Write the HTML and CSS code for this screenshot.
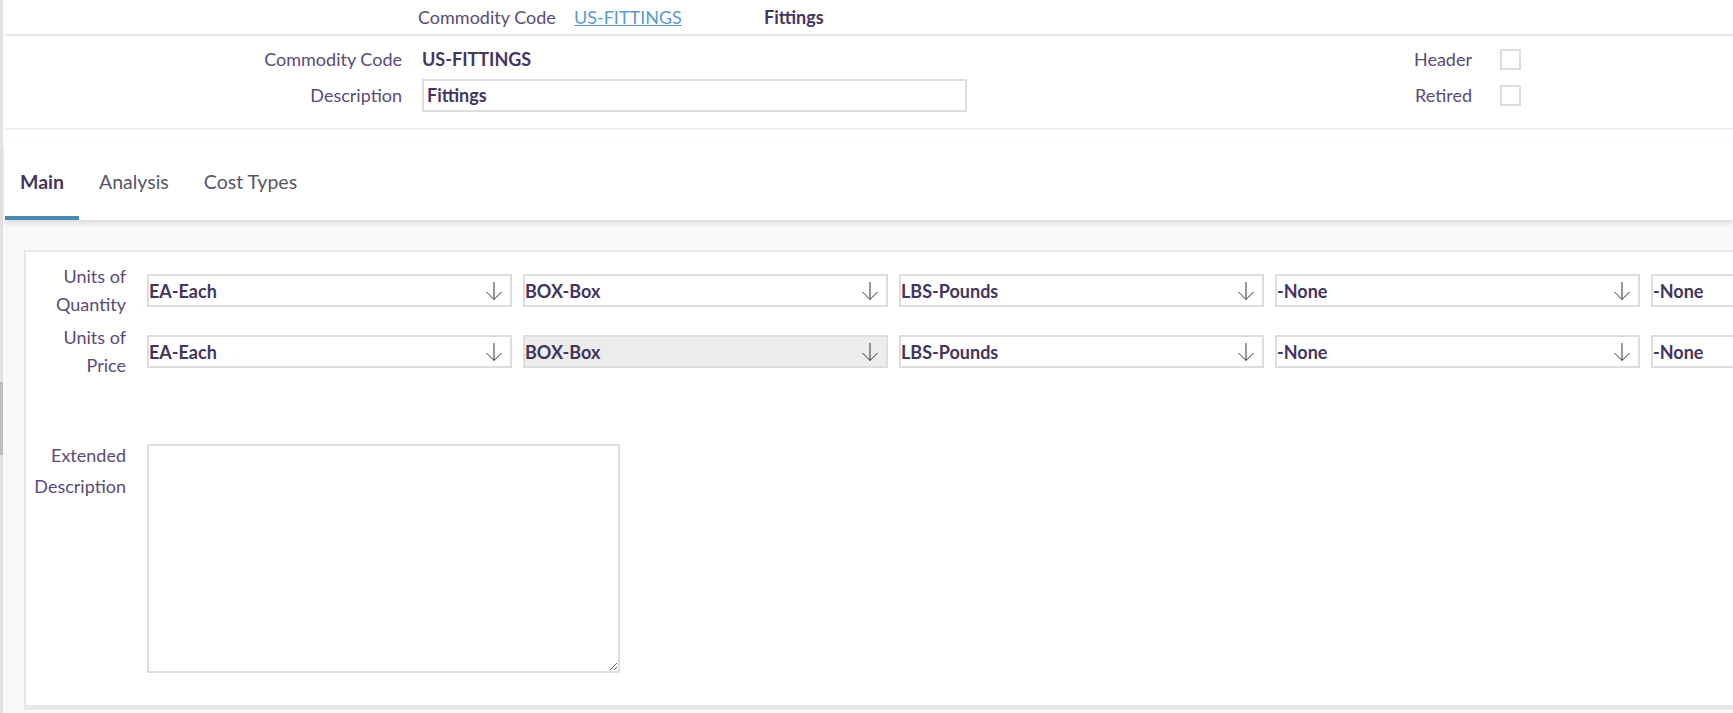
FILE: index.html
```html
<!DOCTYPE html>
<html lang="en">
<head>
<meta charset="utf-8">
<title>Commodity Code</title>
<link rel="stylesheet" href="styles.css">
</head>
<body>
<div class="screen">
  <div class="edge"><div class="edge-thumb"></div></div>
  <div class="page">
    <div class="topbar">
      <span class="top-label">Commodity Code</span>
      <a class="top-link" href="#">US-FITTINGS</a>
      <span class="top-value">Fittings</span>
    </div>

    <div class="record">
      <div class="record-grid">
        <label class="lbl">Commodity Code</label>
        <span class="val">US-FITTINGS</span>
        <label class="lbl">Description</label>
        <div class="textbox">Fittings</div>
      </div>
      <div class="flag-grid">
        <label class="lbl">Header</label>
        <span class="checkbox"></span>
        <label class="lbl">Retired</label>
        <span class="checkbox"></span>
      </div>
    </div>

    <div class="tabs-wrap">
      <nav class="tabs">
        <a class="tab active" href="#">Main</a>
        <a class="tab" href="#">Analysis</a>
        <a class="tab" href="#">Cost Types</a>
      </nav>
    </div>

    <div class="content">
      <div class="panel">
        <div class="uom-row">
          <div class="uom-label">Units of<br>Quantity</div>
          <div class="select"><span>EA-Each</span><svg class="arrow" viewBox="0 0 18 20"><path d="M9 1V18.5M1.5 11L9 18.5L16.5 11"/></svg></div>
          <div class="select"><span>BOX-Box</span><svg class="arrow" viewBox="0 0 18 20"><path d="M9 1V18.5M1.5 11L9 18.5L16.5 11"/></svg></div>
          <div class="select"><span>LBS-Pounds</span><svg class="arrow" viewBox="0 0 18 20"><path d="M9 1V18.5M1.5 11L9 18.5L16.5 11"/></svg></div>
          <div class="select"><span>-None</span><svg class="arrow" viewBox="0 0 18 20"><path d="M9 1V18.5M1.5 11L9 18.5L16.5 11"/></svg></div>
          <div class="select"><span>-None</span><svg class="arrow" viewBox="0 0 18 20"><path d="M9 1V18.5M1.5 11L9 18.5L16.5 11"/></svg></div>
        </div>
        <div class="uom-row">
          <div class="uom-label">Units of<br>Price</div>
          <div class="select"><span>EA-Each</span><svg class="arrow" viewBox="0 0 18 20"><path d="M9 1V18.5M1.5 11L9 18.5L16.5 11"/></svg></div>
          <div class="select disabled"><span>BOX-Box</span><svg class="arrow" viewBox="0 0 18 20"><path d="M9 1V18.5M1.5 11L9 18.5L16.5 11"/></svg></div>
          <div class="select"><span>LBS-Pounds</span><svg class="arrow" viewBox="0 0 18 20"><path d="M9 1V18.5M1.5 11L9 18.5L16.5 11"/></svg></div>
          <div class="select"><span>-None</span><svg class="arrow" viewBox="0 0 18 20"><path d="M9 1V18.5M1.5 11L9 18.5L16.5 11"/></svg></div>
          <div class="select"><span>-None</span><svg class="arrow" viewBox="0 0 18 20"><path d="M9 1V18.5M1.5 11L9 18.5L16.5 11"/></svg></div>
        </div>
        <div class="ext-row">
          <div class="ext-label">Extended<br>Description</div>
          <textarea class="ext-text"></textarea>
        </div>
      </div>
    </div>
  </div>
</div>
</body>
</html>
```

FILE: styles.css
```css
html, body {
  margin: 0;
  padding: 0;
  overflow: hidden;
  background: #ffffff;
}

body {
  font-family: Lato, "Open Sans", sans-serif;
  font-size: 18px;
  color: #5a4a78;
}

.screen {
  display: flex;
  width: 1733px;
  height: 713px;
  overflow: hidden;
}

.edge {
  flex: none;
  width: 3px;
  background: #e2e2e2;
}

.edge-thumb {
  margin-top: 382px;
  height: 73px;
  background: #bdbdbd;
}

.page {
  flex: 1;
  min-width: 0;
  display: flex;
  flex-direction: column;
}

/* top bar */
.topbar {
  margin-left: 2px;
  height: 35px;
  border-bottom: 2px solid #e6e6e6;
  display: grid;
  grid-template-columns: 156px 190px auto;
  align-items: center;
  padding-left: 413px;
}

.top-label {
  color: #5a4a78;
}

.top-link {
  color: #5a9ccc;
  text-decoration: underline;
}

.top-value {
  font-weight: 700;
  color: #43355e;
}

/* record header */
.record {
  margin-left: 2px;
  display: flex;
  padding: 7px 0 17px;
  border-bottom: 2px solid #eeeeee;
}

.record-grid {
  margin-left: 247px;
  display: grid;
  grid-template-columns: 150px 545px;
  grid-auto-rows: 32px;
  column-gap: 20px;
  row-gap: 4px;
  align-items: center;
}

.flag-grid {
  margin-left: 425px;
  display: grid;
  grid-template-columns: 80px 21px;
  grid-auto-rows: 32px;
  column-gap: 28px;
  row-gap: 4px;
  align-items: center;
}

.lbl {
  text-align: right;
  color: #5a4a78;
}

.val {
  font-weight: 700;
  color: #43355e;
}

.textbox {
  box-sizing: border-box;
  height: 33px;
  border: 2px solid #dedede;
  padding: 0 3px;
  display: flex;
  align-items: center;
  font-weight: 700;
  color: #43355e;
}

.checkbox {
  box-sizing: border-box;
  width: 21px;
  height: 21px;
  border: 2px solid #dcdcdc;
  background: #fff;
}

/* tabs */
.tabs-wrap {
  padding-top: 12px;
}

.tabs {
  margin-left: 2px;
  height: 78px;
  display: flex;
  gap: 5px;
  background: #fff;
  box-shadow: 0 3px 6px rgba(0, 0, 0, 0.13);
  position: relative;
  z-index: 1;
}

.tab {
  box-sizing: border-box;
  padding: 4px 15px 0;
  display: flex;
  align-items: center;
  border-bottom: 4px solid transparent;
  text-decoration: none;
  color: #5a5566;
  font-size: 19.5px;
}

.tab.active {
  font-weight: 700;
  color: #43355e;
  border-bottom-color: #4b88ab;
}

/* content */
.content {
  flex: 1;
  background: #f9f9f9;
  padding: 30px 0 3px 21px;
}

.panel {
  width: 1900px;
  background: #fff;
  border: 2px solid #e8e8e8;
  border-bottom-width: 5px;
  padding: 10px 0 32px;
}

.uom-row {
  height: 58px;
  display: flex;
  align-items: flex-start;
  margin-bottom: 3px;
}

.uom-label {
  flex: none;
  width: 100px;
  margin-right: 21px;
  text-align: right;
  line-height: 28px;
  color: #5a4a78;
}

.select {
  box-sizing: border-box;
  flex: none;
  width: 365px;
  height: 33px;
  margin: 12px 11px 0 0;
  border: 2px solid #dedede;
  background: #fff;
  display: flex;
  align-items: center;
  justify-content: space-between;
  padding: 0 7px 0 0;
  font-weight: 700;
  color: #43355e;
}

.select.disabled {
  background: #ececec;
}

.arrow {
  width: 18px;
  height: 20px;
  fill: none;
  stroke: #333;
  stroke-width: 1;
}

.ext-row {
  display: flex;
  align-items: flex-start;
  margin-top: 59px;
}

.ext-label {
  flex: none;
  width: 100px;
  margin-right: 21px;
  text-align: right;
  line-height: 31px;
  color: #5a4a78;
}

.ext-text {
  box-sizing: border-box;
  width: 473px;
  height: 229px;
  margin: 4px 0 0;
  border: 2px solid #dedede;
  resize: both;
  font-family: inherit;
  font-size: 16px;
  outline: none;
}
```
